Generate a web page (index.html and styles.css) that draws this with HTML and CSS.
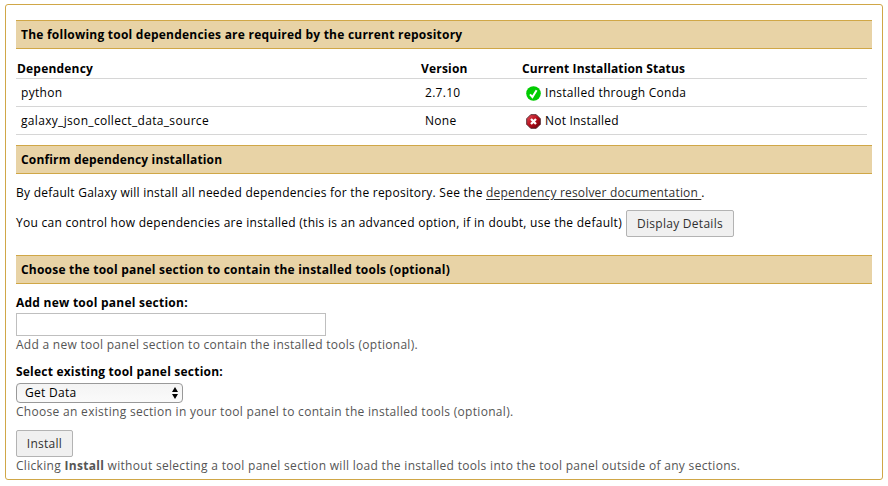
FILE: index.html
```
<!DOCTYPE html>
<html lang="en">
<head>
<meta charset="utf-8">
<title>Install repository</title>
<link rel="stylesheet" href="styles.css">
</head>
<body>
<main class="panel">
  <h2 class="bar">The following tool dependencies are required by the current repository</h2>
  <table class="deps">
    <thead>
      <tr><th class="c-name">Dependency</th><th class="c-version">Version</th><th class="c-status">Current Installation Status</th></tr>
    </thead>
    <tbody>
      <tr>
        <td class="name">python</td><td>2.7.10</td>
        <td><div class="status">
          <svg class="icon" viewBox="0 0 15 15"><circle cx="7.5" cy="7.5" r="7.3" fill="#0c0"/><path d="M4 8.4 6.4 11 10.6 4.2" fill="none" stroke="#fff" stroke-width="2"/></svg>
          <span>Installed through Conda</span>
        </div></td>
      </tr>
      <tr>
        <td class="name">galaxy_json_collect_data_source</td><td>None</td>
        <td><div class="status">
          <svg class="icon" viewBox="0 0 15 15"><defs><linearGradient id="red" x2="1" y2="1"><stop offset="0" stop-color="#e8525c"/><stop offset=".5" stop-color="#b60d1b"/><stop offset="1" stop-color="#650008"/></linearGradient></defs><path d="M4.7.7h5.6l4 4v5.6l-4 4H4.7l-4-4V4.7z" fill="url(#red)" stroke="#4b2028" stroke-width=".9"/><path d="m5 5 5 5m0-5-5 5" stroke="#fff" stroke-width="2.3"/></svg>
          <span class="missing">Not Installed</span>
        </div></td>
      </tr>
    </tbody>
  </table>

  <h2 class="bar bar-confirm">Confirm dependency installation</h2>
  <p class="intro"><span class="intro-text">By default Galaxy will install all needed dependencies for the repository. See the </span><a class="link" href="#">dependency resolver documentation&nbsp;</a>.</p>
  <div class="control"><span class="control-text">You can control how dependencies are installed (this is an advanced option, if in doubt, use the default)</span><button class="btn btn-details" type="button">Display Details</button></div>

  <h2 class="bar bar-choose">Choose the tool panel section to contain the installed tools (optional)</h2>
  <form class="form">
    <label class="label" for="section">Add new tool panel section:</label>
    <input class="input" id="section" type="text">
    <p class="help">Add a new tool panel section to contain the installed tools (optional).</p>
    <label class="label label-select">Select existing tool panel section:</label>
    <div class="select"><span>Get Data</span><svg class="arrows" viewBox="0 0 6 12"><path d="M0 5 3 0l3 5zM0 7h6L3 12z"/></svg></div>
    <p class="help help-select">Choose an existing section in your tool panel to contain the installed tools (optional).</p>
    <button class="btn btn-install" type="button">Install</button>
    <p class="help help-install">Clicking <b>Install</b> without selecting a tool panel section will load the installed tools into the tool panel outside of any sections.</p>
  </form>
</main>
</body>
</html>
```
FILE: styles.css
```
* { box-sizing: border-box; }
body {
  margin: 0;
  background: #fff;
  color: #000;
  font: 12px/18px "Open Sans", "Noto Sans", sans-serif;
  letter-spacing: .278px;
}
.panel {
  width: 878px;
  height: 476px;
  margin: 4px 0 0 5px;
  padding: 15px 10px 0;
  border: 1px solid #d0a747;
  border-radius: 3px;
}
.bar {
  height: 29px;
  margin: 0;
  padding: 0 5px;
  border: solid #d0a747;
  border-width: 1px 0;
  background: #e8d3a6;
  font-size: 12px;
  font-weight: 700;
  line-height: 27px;
  letter-spacing: .23px;
}
.bar-confirm { margin-top: 10px; letter-spacing: .16px; }
.bar-choose { margin-top: 18px; letter-spacing: .215px; }

.deps {
  width: 851px;
  margin-top: 9px;
  border-collapse: separate;
  border-spacing: 0;
  table-layout: fixed;
}
.deps th {
  height: 21px;
  padding: 1px 1px 0;
  border-bottom: 1px solid #d6d6d6;
  text-align: left;
  letter-spacing: .19px;
}
.deps .c-name { width: 404px; }
.deps .c-version { width: 101px; }
.deps .c-status { letter-spacing: .11px; }
.deps td {
  height: 28px;
  padding: 0 5px;
  border-bottom: 1px solid #d6d6d6;
}
.deps .name { letter-spacing: .324px; }
.status { display: flex; align-items: center; gap: 4px; }
.missing { letter-spacing: .2px; }
.icon { width: 15px; height: 15px; margin-top: 1px; }

.intro { margin: 10px 0 0; white-space: nowrap; }
.intro-text { letter-spacing: .25px; }
.link { color: #303030; letter-spacing: .185px; text-decoration: underline; text-underline-offset: 2px; }
.control { display: flex; align-items: center; gap: 4px; height: 27px; margin-top: 8px; white-space: nowrap; }
.control-text { padding-bottom: 2px; }
.btn {
  display: block;
  height: 27px;
  padding: 0;
  border: 1px solid #b3b3b3;
  border-radius: 2px;
  background: #f0f0f0;
  color: #303030;
  font: inherit;
  letter-spacing: .278px;
}
.btn-details { width: 108px; }
.btn-install { width: 57px; margin-top: 9px; }

.label { display: block; margin-top: 10px; font-weight: 700; letter-spacing: .245px; }
.input { display: block; width: 310px; height: 23px; margin-top: 1px; border: 1px solid #bfbfbf; background: #fff; }
.help { margin: 0; color: #555; white-space: nowrap; }
.label-select { margin-top: 9px; letter-spacing: .21px; }
.select {
  display: flex;
  align-items: center;
  justify-content: space-between;
  width: 167px;
  height: 20px;
  margin-top: 2px;
  padding: 0 4px 0 8px;
  border: 1px solid #999;
  border-radius: 4px;
  background: linear-gradient(#f4f4f4, #fafafa);
}
.arrows { width: 6px; height: 12px; }
.help-select { letter-spacing: .304px; }
.help-install { letter-spacing: .303px; }
```
